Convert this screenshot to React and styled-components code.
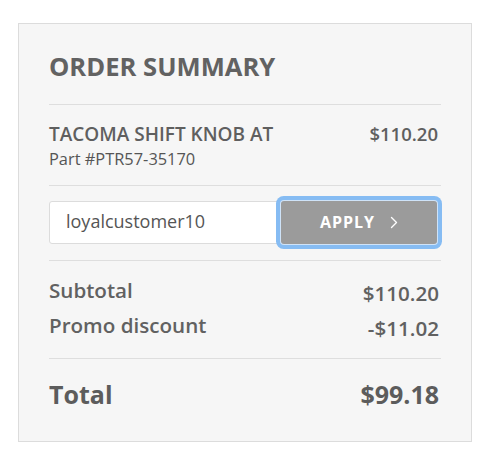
import React from "react";
import styled, { createGlobalStyle } from "styled-components";

const GlobalStyle = createGlobalStyle`
  html, body { margin: 0; padding: 0; background: #ffffff; }
  body { font-family: "Open Sans", "Liberation Sans", sans-serif; }
  * { box-sizing: border-box; }
`;

const Page = styled.div`
  padding: 23px 17px 0 18px;
`;

const Panel = styled.section`
  width: 454px;
  background: #f6f6f6;
  border: 1px solid #dcdcdc;
  padding: 25px 30px 29px 30px;
  color: #5f5f5f;
`;

const Title = styled.h2`
  margin: 0;
  font-size: 25.6px;
  line-height: 36px;
  font-weight: 700;
  color: #626262;
`;

const Divider = styled.hr`
  border: 0;
  height: 1px;
  background: #dedede;
  margin: ${(p) => p.$m};
`;

const ItemRow = styled.div`
  display: flex;
  justify-content: space-between;
  align-items: flex-start;
`;

const ItemInfo = styled.div`
  display: flex;
  flex-direction: column;
`;

const ItemName = styled.div`
  font-size: 19px;
  line-height: 24px;
  font-weight: 600;
`;

const PartNo = styled.div`
  font-size: 16.4px;
  line-height: 24px;
  margin-top: 1px;
  font-weight: 400;
  color: #555;
`;

const Price = styled.div`
  font-size: 18.5px;
  line-height: 24px;
  font-weight: 600;
  padding-right: 3px;
`;

const PromoRow = styled.div`
  display: flex;
  align-items: stretch;
  padding-right: 4px;
`;

const PromoInput = styled.input`
  flex: 1;
  min-width: 0;
  height: 43px;
  border: 1px solid #dcdcdc;
  border-radius: 3px;
  background: #fff;
  padding: 0 0 3px 16px;
  font-family: "Open Sans", "Liberation Sans", sans-serif;
  font-size: 18px;
  color: #555;
  outline: none;
`;

const ApplyButton = styled.button`
  position: relative;
  z-index: 1;
  width: 156px;
  height: 43px;
  border: 0;
  border-radius: 3px;
  background: #9b9b9b;
  color: #fff;
  font-family: "Open Sans", "Liberation Sans", sans-serif;
  font-size: 16px;
  font-weight: 700;
  letter-spacing: 1px;
  display: flex;
  align-items: center;
  justify-content: center;
  gap: 15px;
  padding: 0 0 1px 0;
  box-shadow: 0 0 0 1px #cfe3f8, 0 0 0 5px #86bcf3;
`;

const SummaryRow = styled.div`
  display: flex;
  justify-content: space-between;
  font-size: ${(p) => (p.$total ? "25px" : "20.6px")};
  line-height: ${(p) => (p.$total ? "36px" : "32px")};
  font-weight: ${(p) => (p.$total ? 700 : 600)};
  color: ${(p) => (p.$total ? "#5c5c5c" : "#616161")};
`;

const Label = styled.span``;

const Value = styled.span`
  padding-top: ${(p) => (p.$total ? "0" : "3px")};
  padding-right: 2px;
`;

const Chevron = () => (
  <svg width="8" height="13" viewBox="0 0 8 13" fill="none">
    <polyline points="1.5,1.5 6.5,6.5 1.5,11.5" stroke="#fff" strokeWidth="1.4" strokeLinecap="round" strokeLinejoin="round" />
  </svg>
);

export default function App() {
  return (
    <>
      <GlobalStyle />
      <Page>
        <Panel>
          <Title>ORDER SUMMARY</Title>
          <Divider $m="19px 0 17px 0" />
          <ItemRow>
            <ItemInfo>
              <ItemName>TACOMA SHIFT KNOB AT</ItemName>
              <PartNo>Part #PTR57-35170</PartNo>
            </ItemInfo>
            <Price>$110.20</Price>
          </ItemRow>
          <Divider $m="14px 0 15px 0" />
          <PromoRow>
            <PromoInput defaultValue="loyalcustomer10" />
            <ApplyButton>
              <span>APPLY</span>
              <Chevron />
            </ApplyButton>
          </PromoRow>
          <Divider $m="16px 0 13px 0" />
          <SummaryRow>
            <Label>Subtotal</Label>
            <Value>$110.20</Value>
          </SummaryRow>
          <SummaryRow>
            <Label>Promo discount</Label>
            <Value>-$11.02</Value>
          </SummaryRow>
          <Divider $m="14px 0 17px 0" />
          <SummaryRow $total>
            <Label>Total</Label>
            <Value $total>$99.18</Value>
          </SummaryRow>
        </Panel>
      </Page>
    </>
  );
}
